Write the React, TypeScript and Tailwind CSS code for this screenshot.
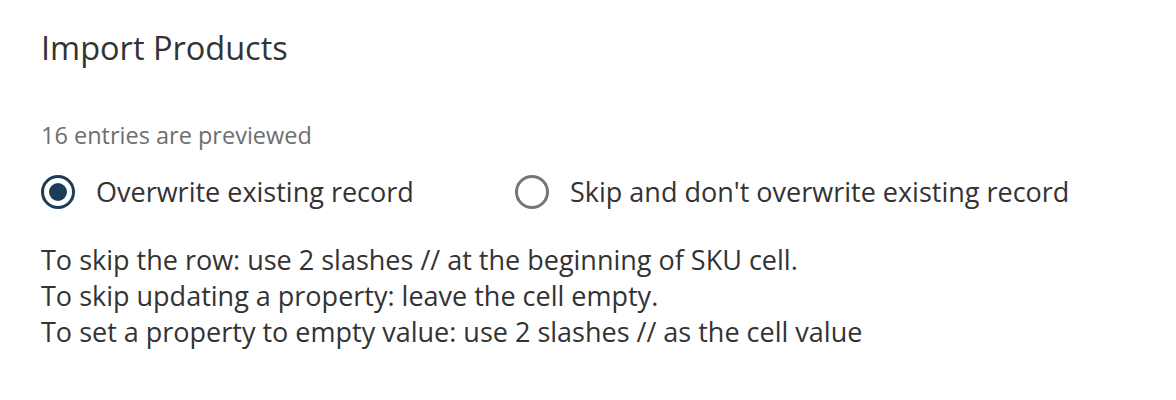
import React, { useState } from "react";

const options = [
  { id: "overwrite", label: "Overwrite existing record" },
  { id: "skip", label: "Skip and don't overwrite existing record" },
];

const Radio: React.FC<{ checked: boolean }> = ({ checked }) => (
  <span
    className={
      checked
        ? "flex h-[34px] w-[34px] shrink-0 items-center justify-center rounded-full border-[3px] border-[#1c3d5a]"
        : "flex h-[34px] w-[34px] shrink-0 items-center justify-center rounded-full border-[3px] border-[#767676]"
    }
  >
    {checked && <span className="h-[18px] w-[18px] rounded-full bg-[#1c3d5a]" />}
  </span>
);

export default function App() {
  const [mode, setMode] = useState("overwrite");

  return (
    <div className="h-[400px] w-[1176px] bg-white px-[41px] pt-[28px] text-[#333333] font-['Open_Sans',sans-serif]">
      <h1 className="text-[32.5px] leading-[40px]">Import Products</h1>

      <p className="mt-[52px] text-[23.5px] leading-[30px] text-[#6e6e6e]">16 entries are previewed</p>

      <div className="mt-[25px] flex items-center">
        {options.map((opt, i) => (
          <label
            key={opt.id}
            className={i === 0 ? "flex w-[474px] cursor-pointer items-center gap-[21px]" : "flex cursor-pointer items-center gap-[21px]"}
            onClick={() => setMode(opt.id)}
          >
            <Radio checked={mode === opt.id} />
            <span className="text-[27px] leading-[34px]">{opt.label}</span>
          </label>
        ))}
      </div>

      <div className="mt-[33px] text-[27px] leading-[36px]">
        <p>To skip the row: use 2 slashes // at the beginning of SKU cell.</p>
        <p>To skip updating a property: leave the cell empty.</p>
        <p>To set a property to empty value: use 2 slashes // as the cell value</p>
      </div>
    </div>
  );
}
